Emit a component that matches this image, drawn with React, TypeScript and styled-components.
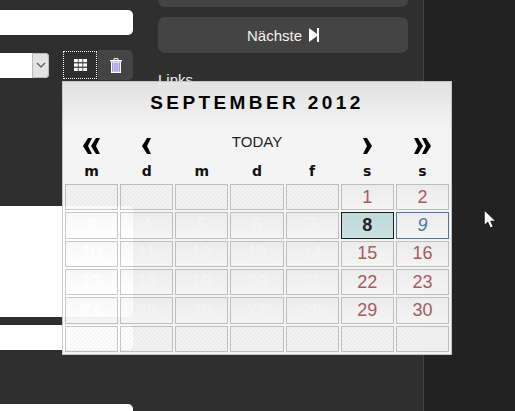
import React from 'react'
import styled, { createGlobalStyle } from 'styled-components'

const GlobalStyle = createGlobalStyle`
  html, body {
    margin: 0;
    padding: 0;
    background: #2f2f2f;
    font-family: "Liberation Sans", Arial, sans-serif;
  }
`

const WEEKDAYS = ['m', 'd', 'm', 'd', 'f', 's', 's']

const Page = styled.div`
  position: relative;
  display: flex;
  width: 515px;
  height: 411px;
  overflow: hidden;
  background: #2f2f2f;
`

const LeftColumn = styled.div`
  display: flex;
  flex-direction: column;
  width: 133px;
  padding-top: 10px;
  box-sizing: border-box;
`

const TextInput = styled.div<{ $height: number; $top: number }>`
  position: relative;
  flex: none;
  height: ${(p) => p.$height}px;
  margin-top: ${(p) => p.$top}px;
  background: #fff;
  border-radius: 0 5px 5px 0;
`

const ToolRow = styled.div`
  display: flex;
  align-items: center;
  height: 30px;
  margin-top: 15px;
`

const SelectBox = styled.div`
  display: flex;
  width: 49px;
  height: 25px;
  background: #fff;
  border-radius: 0 4px 4px 0;
  overflow: hidden;
`

const SelectField = styled.div`
  flex: 1;
`

const SelectArrow = styled.div`
  display: flex;
  align-items: center;
  justify-content: center;
  width: 17px;
  box-sizing: border-box;
  background: #e3e3e3;
  border: 1px solid #bbb;
  border-radius: 0 4px 4px 0;
`

const GridButton = styled.div`
  display: flex;
  align-items: center;
  justify-content: center;
  width: 34px;
  height: 28px;
  margin-left: 14px;
  box-sizing: border-box;
  border: 1px dotted #fff;
`

const TrashButton = styled.div`
  display: flex;
  align-items: center;
  justify-content: center;
  width: 35px;
  height: 30px;
  margin-left: 1px;
  background: #444;
  border-radius: 0 5px 5px 0;
`

const FadedIcon = styled.div`
  position: absolute;
  right: 2px;
  bottom: 1px;
  display: flex;
`

const Divider = styled.div`
  height: 1px;
  margin-top: 33px;
  background: #444;
`

const SideColumn = styled.div`
  display: flex;
  flex-direction: column;
  gap: 10px;
  width: 250px;
  margin-left: 25px;
`

const SideButton = styled.div<{ $height: number }>`
  display: flex;
  align-items: center;
  justify-content: center;
  gap: 7px;
  height: ${(p) => p.$height}px;
  background: #444;
  border-radius: ${(p) => (p.$height < 20 ? '0 0 7px 7px' : '7px')};
  color: #f2f2f2;
  font-size: 15px;
`

const SideHeading = styled.div`
  margin-top: 8px;
  color: #f2f2f2;
  font-size: 15px;
  line-height: 18px;
`

const RightEdge = styled.div`
  flex: 1;
  margin-left: 15px;
  background: #222;
  border-left: 1px solid #444;
`

const Cursor = styled.svg`
  position: absolute;
  left: 483px;
  top: 209px;
`

const Calendar = styled.div`
  position: absolute;
  left: 62px;
  top: 81px;
  width: 390px;
  height: 274px;
  box-sizing: border-box;
  padding: 0 2px;
  border: 1px solid #ccc;
  background: linear-gradient(#ebebeb, #fff 46px);
  opacity: 0.95;
`

const Title = styled.div`
  height: 44px;
  line-height: 41px;
  text-align: center;
  font-size: 19px;
  font-weight: 700;
  letter-spacing: 3.4px;
  color: #000;
`

const NavRow = styled.div`
  display: grid;
  grid-template-columns: repeat(7, 1fr);
  column-gap: 2px;
  align-items: center;
  height: 32px;
`

const NavButton = styled.div`
  display: flex;
  justify-content: center;
  margin-top: 8px;
`

const Today = styled.div`
  grid-column: span 3;
  margin-top: -2px;
  text-align: center;
  font-size: 15px;
  color: #222;
`

const WeekRow = styled.div`
  display: grid;
  grid-template-columns: repeat(7, 1fr);
  column-gap: 2px;
  height: 26px;
  line-height: 27px;
  text-align: center;
  font-family: "DejaVu Sans", sans-serif;
  font-size: 14px;
  font-weight: 700;
  color: #111;
`

const DayGrid = styled.div`
  display: grid;
  grid-template-columns: repeat(7, 1fr);
  grid-auto-rows: 1fr;
  gap: 2px;
  height: 168px;
`

type DayKind = 'empty' | 'plain' | 'weekend' | 'current' | 'hover'

const dayColors: Record<DayKind, string> = {
  empty: 'transparent',
  plain: '#fff',
  weekend: '#aa5f63',
  current: '#222',
  hover: '#5579a8',
}

const DayCell = styled.div<{ $kind: DayKind }>`
  display: flex;
  align-items: center;
  justify-content: center;
  box-sizing: border-box;
  font-size: 18px;
  color: ${(p) => dayColors[p.$kind]};
  font-weight: ${(p) => (p.$kind === 'current' ? 700 : 400)};
  font-style: ${(p) => (p.$kind === 'hover' ? 'italic' : 'normal')};
  border: 1px solid
    ${(p) => (p.$kind === 'current' ? '#1c1c1c' : p.$kind === 'hover' ? '#5579a8' : '#c6c6c6')};
  background: ${(p) =>
    p.$kind === 'empty'
      ? 'repeating-linear-gradient(135deg, #fff 0 1.414px, #f5f5f5 1.414px 2.828px)'
      : p.$kind === 'current'
        ? 'linear-gradient(#c6e2e4, #d6ecec)'
        : 'linear-gradient(#f7f7f7, #fff)'};
`

const GridIcon = ({ color = '#fff', size = 13 }: { color?: string; size?: number }) => (
  <svg width={size} height={(size * 12) / 13} viewBox="0 0 13 12" fill={color}>
    {[0, 4.4, 8.8].map((y) =>
      [0, 4.6, 9.2].map((x) => <rect key={`${x}-${y}`} x={x} y={y} width="3.8" height="3.2" />)
    )}
  </svg>
)

const TrashIcon = () => (
  <svg width="12" height="15" viewBox="0 0 12 15">
    <path d="M4 2.2V.6h4v1.6" fill="none" stroke="#fff" strokeWidth="1" />
    <rect x="0" y="2" width="12" height="1.6" fill="#fff" />
    <path d="M1 3.6h10V15H1z" fill="#fff" />
    <path d="M2.8 4.6v9.2M5 4.6v9.2M7 4.6v9.2M9.2 4.6v9.2" stroke="#8f8fe4" strokeWidth="1.4" />
  </svg>
)

const ChevronDown = () => (
  <svg width="10" height="6" viewBox="0 0 10 6">
    <path d="M1 1l4 4 4-4" fill="none" stroke="#555" strokeWidth="1.2" />
  </svg>
)

const NextIcon = () => (
  <svg width="10" height="14" viewBox="0 0 10 14" fill="#fff">
    <path d="M0 0l8 6V0h2v14H8V8l-8 6z" />
  </svg>
)

const ChevronNav = ({ count, flip }: { count: number; flip?: boolean }) => (
  <svg
    width={count === 2 ? 17 : 9}
    height="16"
    viewBox={count === 2 ? '0 0 17 16' : '0 0 9 16'}
    style={flip ? { transform: 'scaleX(-1)' } : undefined}>
    <path d="M5 0h4L5 8l4 8H5L0 8z" fill="#000" />
    {count === 2 && <path d="M13 0h4l-4 8 4 8h-4L8 8z" fill="#000" />}
  </svg>
)

const kindForDay = (day: number): DayKind => {
  if (day === 8) return 'current'
  if (day === 9) return 'hover'
  const weekday = (day + 4) % 7
  return weekday >= 5 ? 'weekend' : 'plain'
}

const App: React.FC = () => {
  const cells: (number | null)[] = [
    ...Array(5).fill(null),
    ...Array.from({ length: 30 }, (_, i) => i + 1),
    ...Array(7).fill(null),
  ]

  return (
    <>
      <GlobalStyle />
      <Page>
        <LeftColumn>
          <TextInput $height={25} $top={0} />
          <ToolRow>
            <SelectBox>
              <SelectField />
              <SelectArrow>
                <ChevronDown />
              </SelectArrow>
            </SelectBox>
            <GridButton>
              <GridIcon />
            </GridButton>
            <TrashButton>
              <TrashIcon />
            </TrashButton>
          </ToolRow>
          <TextInput $height={111} $top={126}>
            <FadedIcon>
              <GridIcon color="#ddd" size={10} />
            </FadedIcon>
          </TextInput>
          <TextInput $height={25} $top={8} />
          <Divider />
          <TextInput $height={30} $top={21} />
        </LeftColumn>
        <SideColumn>
          <SideButton $height={7} />
          <SideButton $height={36}>
            Nächste
            <NextIcon />
          </SideButton>
          <SideHeading>Links</SideHeading>
        </SideColumn>
        <RightEdge />
        <Calendar>
          <Title>SEPTEMBER 2012</Title>
          <NavRow>
            <NavButton>
              <ChevronNav count={2} />
            </NavButton>
            <NavButton>
              <ChevronNav count={1} />
            </NavButton>
            <Today>TODAY</Today>
            <NavButton>
              <ChevronNav count={1} flip />
            </NavButton>
            <NavButton>
              <ChevronNav count={2} flip />
            </NavButton>
          </NavRow>
          <WeekRow>
            {WEEKDAYS.map((day, i) => (
              <div key={i}>{day}</div>
            ))}
          </WeekRow>
          <DayGrid>
            {cells.map((day, i) => (
              <DayCell key={i} $kind={day ? kindForDay(day) : 'empty'}>
                {day}
              </DayCell>
            ))}
          </DayGrid>
        </Calendar>
        <Cursor width="14" height="20" viewBox="0 0 13 19">
          <path d="M1 1v14.5l3.4-3L6.8 18l2.8-1.2-2.4-5.2H12z" fill="#fff" stroke="#000" strokeWidth="0.8" />
        </Cursor>
      </Page>
    </>
  )
}

export default App
